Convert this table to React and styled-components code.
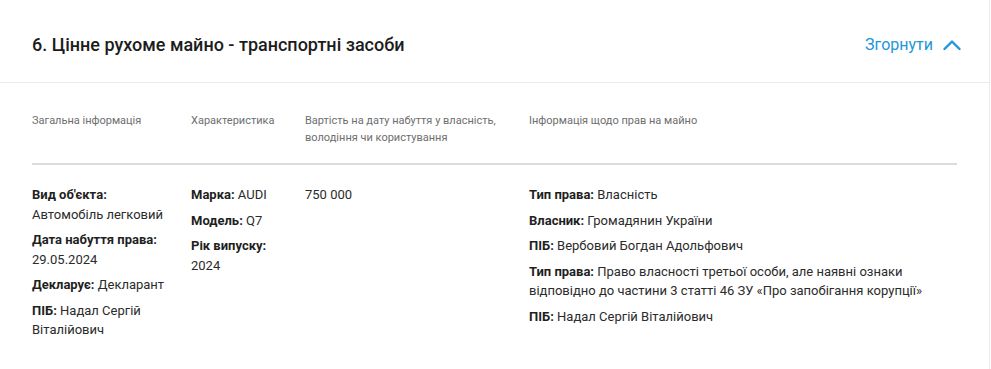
import React from "react";
import styled, { createGlobalStyle } from "styled-components";

const GlobalStyle = createGlobalStyle`
  body {
    margin: 0;
    background: #fff;
    font-family: Roboto, "Liberation Sans", sans-serif;
  }
`;

const Card = styled.section`
  width: 989px;
  min-height: 369px;
  background-color: #fff;
  border-right: 1px solid #e8eaf0;
`;

const Header = styled.div`
  display: flex;
  align-items: center;
  justify-content: space-between;
  padding: 33px 28px 25px 32px;
  border-bottom: 1px solid #ebebeb;
`;

const Title = styled.h2`
  margin: 0;
  font-size: 18px;
  line-height: 24px;
  font-weight: 500;
  color: #1c1c1c;
`;

const Toggle = styled.button`
  display: flex;
  align-items: center;
  gap: 10px;
  padding: 0;
  border: none;
  background: none;
  font-family: inherit;
  font-size: 16px;
  line-height: 24px;
  color: #2196db;
  cursor: pointer;
`;

const Table = styled.div`
  padding: 30px 32px 0 32px;
`;

const Row = styled.div`
  display: grid;
  grid-template-columns: 143px 98px 208px 1fr;
  column-gap: 16px;
`;

const HeadRow = styled(Row)`
  padding-bottom: 17px;
  border-bottom: 2px solid #dcdcdc;
`;

const BodyRow = styled(Row)`
  padding-top: 20px;
`;

const HeadCell = styled.div`
  font-size: 11px;
  line-height: 1.5;
  color: #6e6e6e;
`;

const Cell = styled.div`
  display: flex;
  flex-direction: column;
  gap: 6px;
`;

const Item = styled.div`
  font-size: 13px;
  line-height: 1.5;
  color: #2b2b2b;

  b {
    font-weight: 700;
    color: #1f1f1f;
  }
`;

const Field = ({ label, children }) => (
  <Item>
    {label && <b>{label}: </b>}
    {children}
  </Item>
);

const ChevronUp = () => (
  <svg width="18" height="12" viewBox="0 0 18 12" fill="none">
    <polyline
      points="1.5,10 9,2.5 16.5,10"
      stroke="currentColor"
      strokeWidth="2.4"
      strokeLinecap="round"
      strokeLinejoin="round"
    />
  </svg>
);

const App = () => (
  <>
    <GlobalStyle />
    <Card>
      <Header>
        <Title>6. Цінне рухоме майно - транспортні засоби</Title>
        <Toggle>
          Згорнути
          <ChevronUp />
        </Toggle>
      </Header>

      <Table>
        <HeadRow>
          <HeadCell>Загальна інформація</HeadCell>
          <HeadCell>Характеристика</HeadCell>
          <HeadCell>
            Вартість на дату набуття у власність, володіння чи користування
          </HeadCell>
          <HeadCell>Інформація щодо прав на майно</HeadCell>
        </HeadRow>

        <BodyRow>
          <Cell>
            <Field label="Вид об'єкта">Автомобіль легковий</Field>
            <Field label="Дата набуття права">29.05.2024</Field>
            <Field label="Декларує">Декларант</Field>
            <Field label="ПІБ">Надал Сергій Віталійович</Field>
          </Cell>
          <Cell>
            <Field label="Марка">AUDI</Field>
            <Field label="Модель">Q7</Field>
            <Field label="Рік випуску">2024</Field>
          </Cell>
          <Cell>
            <Field>750 000</Field>
          </Cell>
          <Cell>
            <Field label="Тип права">Власність</Field>
            <Field label="Власник">Громадянин України</Field>
            <Field label="ПІБ">Вербовий Богдан Адольфович</Field>
            <Field label="Тип права">
              Право власності третьої особи, але наявні ознаки відповідно до
              частини 3 статті 46 ЗУ «Про запобігання корупції»
            </Field>
            <Field label="ПІБ">Надал Сергій Віталійович</Field>
          </Cell>
        </BodyRow>
      </Table>
    </Card>
  </>
);

export default App;
